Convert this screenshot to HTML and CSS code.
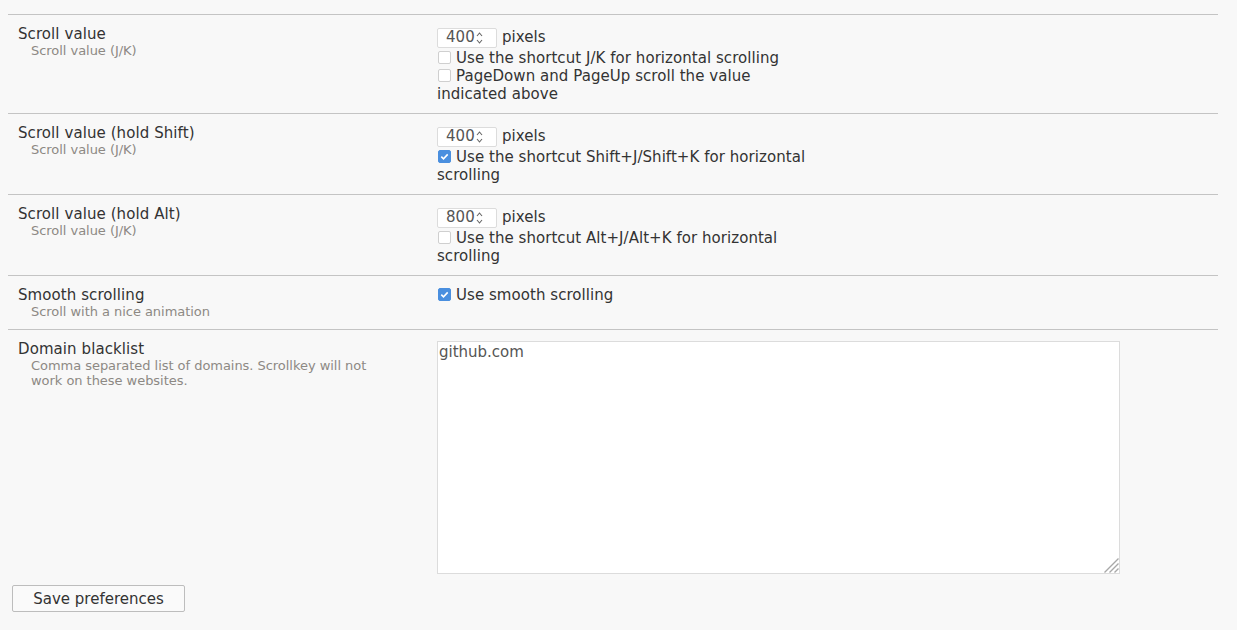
FILE: index.html
```html
<!DOCTYPE html>
<html>
<head>
<meta charset="utf-8">
<link rel="stylesheet" href="styles.css">
</head>
<body>
<div class="prefs">
  <div class="row">
    <div class="label">
      <div class="title">Scroll value</div>
      <div class="desc">Scroll value (J/K)</div>
    </div>
    <div class="control">
      <div class="numline"><span class="num">400<svg class="spin" width="7" height="14" viewBox="0 0 7 14"><path d="M1 5 L3.5 2 L6 5 M1 9 L3.5 12 L6 9" fill="none" stroke="#666" stroke-width="1.1"/></svg></span><span class="unit">pixels</span></div>
      <div class="line"><span class="cb"></span>Use the shortcut J/K for horizontal scrolling</div>
      <div class="line"><span class="cb"></span>PageDown and PageUp scroll the value indicated above</div>
    </div>
  </div>
  <div class="row">
    <div class="label">
      <div class="title">Scroll value (hold Shift)</div>
      <div class="desc">Scroll value (J/K)</div>
    </div>
    <div class="control">
      <div class="numline"><span class="num">400<svg class="spin" width="7" height="14" viewBox="0 0 7 14"><path d="M1 5 L3.5 2 L6 5 M1 9 L3.5 12 L6 9" fill="none" stroke="#666" stroke-width="1.1"/></svg></span><span class="unit">pixels</span></div>
      <div class="line"><span class="cb checked"><svg width="13" height="13" viewBox="0 0 13 13"><path d="M3.3 6.6 L5.5 8.8 L9.7 4.4" fill="none" stroke="#fff" stroke-width="1.6"/></svg></span>Use the shortcut Shift+J/Shift+K for horizontal scrolling</div>
    </div>
  </div>
  <div class="row">
    <div class="label">
      <div class="title">Scroll value (hold Alt)</div>
      <div class="desc">Scroll value (J/K)</div>
    </div>
    <div class="control">
      <div class="numline"><span class="num">800<svg class="spin" width="7" height="14" viewBox="0 0 7 14"><path d="M1 5 L3.5 2 L6 5 M1 9 L3.5 12 L6 9" fill="none" stroke="#666" stroke-width="1.1"/></svg></span><span class="unit">pixels</span></div>
      <div class="line"><span class="cb"></span>Use the shortcut Alt+J/Alt+K for horizontal scrolling</div>
    </div>
  </div>
  <div class="row">
    <div class="label">
      <div class="title">Smooth scrolling</div>
      <div class="desc">Scroll with a nice animation</div>
    </div>
    <div class="control">
      <div class="line"><span class="cb checked"><svg width="13" height="13" viewBox="0 0 13 13"><path d="M3.3 6.6 L5.5 8.8 L9.7 4.4" fill="none" stroke="#fff" stroke-width="1.6"/></svg></span>Use smooth scrolling</div>
    </div>
  </div>
  <div class="row">
    <div class="label">
      <div class="title">Domain blacklist</div>
      <div class="desc">Comma separated list of domains. Scrollkey will not work on these websites.</div>
    </div>
    <div class="control wide">
      <div class="areawrap">
        <textarea class="area">github.com</textarea>
        <svg class="grip" width="15" height="15" viewBox="0 0 15 15"><path d="M0.5 14.5 L14.5 0.5 M5.5 14.5 L14.5 5.5 M10.5 14.5 L14.5 10.5" fill="none" stroke="#a8a8a8" stroke-width="1.4"/></svg>
      </div>
    </div>
  </div>
</div>
<button class="save">Save preferences</button>
</body>
</html>
```
FILE: styles.css
```css
html, body {
  background: #f8f8f8;
}
body {
  margin: 8px;
  font-family: "DejaVu Sans", sans-serif;
  color: #333;
}
.prefs {
  width: 1210px;
  margin-top: 6px;
}
.row {
  display: grid;
  grid-template-columns: 419px 1fr;
  border-top: 1px solid #c4c4c4;
  padding: 10px 10px 10px 10px;
}
.title {
  font-size: 15px;
  line-height: 18px;
  color: #333;
  letter-spacing: 0.08px;
}
.desc {
  font-size: 13px;
  line-height: 15px;
  color: #8d8984;
  padding-left: 13px;
  max-width: 350px;
  letter-spacing: -0.04px;
}
.control {
  width: 380px;
  font-size: 15px;
  line-height: 18px;
  color: #333;
  letter-spacing: 0.05px;
}
.control.wide {
  width: auto;
  padding-top: 1px;
}
.numline {
  display: flex;
  align-items: flex-start;
  padding-top: 3px;
  height: 21px;
}
.num {
  box-sizing: border-box;
  width: 60px;
  height: 20px;
  background: #fff;
  border: 1px solid #dcdcdc;
  border-radius: 2px;
  color: #555;
  font-size: 15px;
  line-height: 18px;
  padding-left: 8px;
  padding-bottom: 2px;
  display: flex;
  align-items: center;
}
.spin {
  margin-left: 1px;
  margin-top: 2px;
}
.unit {
  margin-left: 5px;
  line-height: 18px;
}
.line {
  min-height: 18px;
}
.cb {
  display: inline-block;
  box-sizing: border-box;
  width: 13px;
  height: 13px;
  border: 1px solid #cfcfcf;
  border-radius: 2px;
  background: #fff;
  vertical-align: -1px;
  margin: 0 5px 0 1px;
  position: relative;
}
.cb.checked {
  background: #4a8fdf;
  border-color: #4a8fdf;
}
.cb svg {
  position: absolute;
  left: -1px;
  top: -1px;
}
.areawrap {
  position: relative;
  width: 683px;
  height: 233px;
}
.area {
  display: block;
  box-sizing: border-box;
  width: 683px;
  height: 233px;
  margin: 0;
  border: 1px solid #dcdcdc;
  background: #fff;
  padding: 1px;
  font-family: "DejaVu Sans", sans-serif;
  font-size: 15px;
  line-height: 18px;
  color: #555;
  resize: none;
}
.grip {
  position: absolute;
  right: 1px;
  bottom: 1px;
}
.save {
  display: block;
  margin-left: 4px;
  margin-top: 1px;
  box-sizing: border-box;
  width: 173px;
  height: 27px;
  background: #fafafa;
  border: 1px solid #bdbdbd;
  border-radius: 2px;
  font-family: "DejaVu Sans", sans-serif;
  font-size: 15px;
  color: #333;
  padding: 0;
}
```
